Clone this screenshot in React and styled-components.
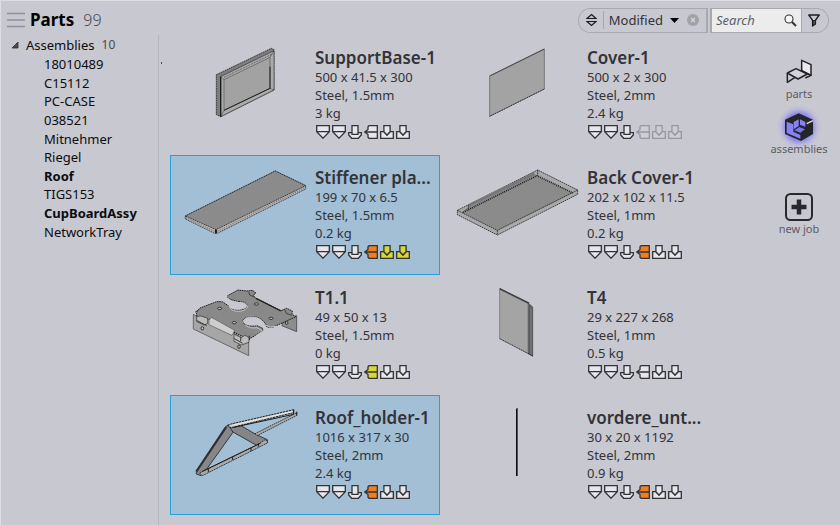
import React, { useState } from "react";
import styled, { createGlobalStyle } from "styled-components";

const GlobalStyle = createGlobalStyle`
  * { box-sizing: border-box; }
  body {
    margin: 0;
    background: #c8c8d0;
    color: #333338;
    font: 13px/18px "Noto Sans", "Open Sans", sans-serif;
  }
  button, input { font: inherit; color: inherit; }
  button { border: 0; padding: 0; background: none; cursor: pointer; }
  svg { display: block; flex: none; }
`;

const Page = styled.div`
  min-height: 100vh;
  display: flex;
  flex-direction: column;
  border-top: 1px solid #dedee3;
  border-left: 1px solid #dedee3;
`;

const Header = styled.header`
  display: flex;
  align-items: center;
  height: 34px;
  padding: 4px 11px 0 6px;
`;

const MenuButton = styled.button`
  margin-right: 5px;
`;

const Title = styled.h1`
  margin: 0;
  font-size: 17px;
  font-weight: 700;
  color: #000;
`;

const Total = styled.span`
  margin-left: 9px;
  flex: 1;
  font-size: 16px;
  font-weight: 300;
  color: #4a4a4f;
`;

const Tools = styled.div`
  display: flex;
  gap: 2px;
  height: 25px;
`;

const SortBox = styled.div`
  display: flex;
  align-items: center;
  border: 1px solid #a9a9ad;
  border-right-width: 2px;
  border-radius: 13px 0 0 13px;
  padding: 0 7px;
`;

const SortField = styled.button`
  display: flex;
  align-items: center;
  gap: 7px;
  margin: 0 8px 0 6px;
  padding-left: 5px;
  border-left: 1px solid #a9a9ad;
`;

const SearchBox = styled.form`
  display: flex;
  align-items: center;
  border: 1px solid #a9a9ad;
  border-left-width: 2px;
  border-radius: 0 13px 13px 0;
`;

const SearchField = styled.label`
  display: flex;
  align-items: center;
  height: 100%;
  width: 90px;
  padding: 0 4px;
  background: #ececec;
  border-right: 1px solid #a9a9ad;
`;

const SearchInput = styled.input`
  flex: 1;
  min-width: 0;
  padding: 0;
  border: 0;
  outline: 0;
  background: none;
  font-size: 13px;
  &::placeholder { color: #5b5f69; font-style: italic; opacity: 1; }
`;

const FilterButton = styled.button`
  padding: 0 8px 0 6px;
`;

const Body = styled.div`
  flex: 1;
  display: flex;
`;

const Tree = styled.nav`
  position: relative;
  width: 158px;
  border-right: 1px solid #b6b6bc;
  color: #0c0c0e;

  &::after {
    content: "";
    position: absolute;
    top: 27px;
    right: -4px;
    width: 1px;
    height: 2px;
    background: #3a4a78;
  }
`;

const Branch = styled.button`
  display: flex;
  align-items: center;
  height: 20px;
  padding-left: 10px;
`;

const BranchCount = styled.span`
  margin-left: 7px;
  font-size: 12px;
  color: #4a4a4f;
`;

const Leaves = styled.ul`
  display: flex;
  flex-direction: column;
  min-height: 186px;
  margin: 0;
  padding: 0 0 0 43px;
  list-style: none;
`;

const Leaf = styled.li`
  flex: 1;
  display: flex;
  align-items: center;
`;

const LeafLink = styled.a`
  color: inherit;
  text-decoration: none;
  font-weight: ${(p) => (p.$strong ? 700 : 400)};
`;

const Grid = styled.main`
  flex: 1;
  display: grid;
  grid-template-columns: repeat(auto-fill, 270px);
  align-content: start;
  column-gap: 2px;
  padding-left: 11px;
`;

const Card = styled.button`
  display: flex;
  min-height: 120px;
  text-align: left;
  border: 1px solid ${(p) => (p.$selected ? "#27a1dd" : "transparent")};
  background: ${(p) => (p.$selected ? "#a2bfd5" : "transparent")};
`;

const Info = styled.span`
  flex: 1;
  min-width: 0;
  display: flex;
  flex-direction: column;
  padding-top: 12px;
`;

const Name = styled.span`
  font-size: 17px;
  line-height: 20px;
  font-weight: 600;
  white-space: nowrap;
`;

const Steps = styled.span`
  display: flex;
  gap: 2px;
  margin: 3px 0 0 1px;
`;

const Rail = styled.aside`
  width: 82px;
  display: flex;
  flex-direction: column;
  align-items: center;
  gap: 11px;
  padding-top: 23px;
`;

const RailButton = styled.button`
  display: flex;
  flex-direction: column;
  align-items: center;
  margin-top: ${(p) => (p.$apart ? 25 : 0)}px;
  font-size: 11px;
  line-height: 16px;
  color: #5c5c62;
`;

const MenuIcon = () => (
  <svg width="18" height="16" viewBox="0 0 18 16" stroke="#909095" strokeWidth="1.4">
    <path d="M0 1.5h18M0 8h18M0 14.5h18" />
  </svg>
);

const SortIcon = () => (
  <svg width="11" height="14" viewBox="0 0 11 14" fill="none" stroke="#1b1b1e" strokeWidth="1.2">
    <path d="M5.5 1.5 10 5.5H1zM1 8.5h9L5.5 12.5z" />
  </svg>
);

const CaretIcon = () => (
  <svg width="9" height="5" viewBox="0 0 9 5"><path d="M0 0h9L4.5 5z" /></svg>
);

const ClearIcon = () => (
  <svg width="12" height="12" viewBox="0 0 12 12">
    <circle cx="6" cy="6" r="6" fill="#a2a2a6" />
    <path d="m4 4 4 4M8 4 4 8" stroke="#d4d4da" strokeWidth="1.3" />
  </svg>
);

const LensIcon = () => (
  <svg width="13" height="13" viewBox="0 0 13 13" fill="none" stroke="#333">
    <circle cx="5" cy="5" r="4" fill="#f6f6f6" strokeWidth="1.1" />
    <path d="m8 8 4 4" strokeWidth="2" />
  </svg>
);

const FilterIcon = () => (
  <svg width="12" height="13" viewBox="0 0 12 13" fill="none" stroke="#1b1b1e" strokeWidth="1.4" strokeLinejoin="round">
    <path d="M.8 1h10.4L7.4 6.3V10L4.6 12V6.3z" />
    <path d="M5 6.5h2.4V10L5 11.5z" fill="#55555a" strokeWidth=".8" />
  </svg>
);

const ExpandedIcon = () => (
  <svg width="15" height="8" viewBox="0 0 15 8"><path d="M7 1v6H1z" fill="#4b4b50" stroke="#303034" strokeWidth=".8" /></svg>
);

const PartIcon = () => (
  <svg width="28" height="28" viewBox="78 24 84 84" stroke="#242427" strokeWidth="4.5" strokeLinejoin="round" fill="none">
    <path d="M128 31 156 44V76L128 62z" fill="#e9e9ee" />
    <path d="M85 69 111 56 145 72 117 87z" fill="#d2d2d8" />
    <path d="M85 69V97L107 83" />
    <path d="M128 62 156 76 139 84" />
  </svg>
);

const AssemblyIcon = () => (
  <svg width="28" height="28" viewBox="78 187 84 84" overflow="visible">
    <defs>
      <radialGradient id="glow">
        <stop offset="0.45" stopColor="#716df5" />
        <stop offset="0.65" stopColor="#8583ee" stopOpacity=".7" />
        <stop offset="0.82" stopColor="#a09fe8" stopOpacity=".28" />
        <stop offset="1" stopColor="#b0b0e0" stopOpacity="0" />
      </radialGradient>
    </defs>
    <circle cx="120" cy="229" r="68" fill="url(#glow)" />
    <path d="M119 188 162 207V250L126 271 78 250V207z" fill="#242429" />
    <path d="M83 213 103 221V243L124 253V264L83 247z" fill="#8582f3" />
    <path d="M104 214 119 206V226L104 236zM123 206 139 214V228L123 222z" fill="#8582f3" />
    <path d="M106 239 121 229 138 236 124 246z" fill="#7774ee" />
    <path d="m143 219 19-9" stroke="#deddf2" strokeWidth="4" />
  </svg>
);

const NewJobIcon = () => (
  <svg width="28" height="28" viewBox="0 0 28 28" fill="none" stroke="#29292c">
    <rect x="1" y="1" width="26" height="26" rx="4.5" strokeWidth="2" />
    <path d="M14 6.5v15M6.5 14h15" strokeWidth="4.5" />
  </svg>
);

const STEP_SHAPES = {
  punch: <path d="M.7.7h12.6v6L7 13.2.7 6.7zM.7 6.7h12.6" />,
  stamp: (
    <>
      <path d="M4 7.7H.7V10L3.7 13.3h6.6l3-3.3V7.7H10z" />
      <path d="M4 .7h6v8.6H4z" />
    </>
  ),
  bend: <path d="M13.3.7H5L4 1.7V4.4L.7 7 4 9.6v2.7l1 1h8.3zM1 7h12.3" />,
  press: (
    <>
      <path d="M.7 6.7H4L7 10l3-3.3h3.3v6.6H.7z" />
      <path d="M3.9.7h6.2v6L7 10 3.9 6.7z" />
    </>
  ),
};

const STEP_ORDER = ["punch", "punch", "stamp", "bend", "press", "press"];
const STEP_FILL = { w: "#e6e6ec", o: "#ee8020", y: "#d7d833", g: "#cdcdd4" };

const StepIcon = ({ shape, tone }) => (
  <svg width="14" height="14" viewBox="0 0 14 14" fill={STEP_FILL[tone]} stroke={tone === "g" ? "#97979c" : "#333336"} strokeWidth="1.3">
    {STEP_SHAPES[shape]}
  </svg>
);

const Drawing = ({ origin, children }) => (
  <svg width="144" height="118" viewBox={`${origin} 432 354`} stroke="#1e1e20" strokeWidth="2.4" strokeLinejoin="round" fill="#9f9f9f">
    {children}
  </svg>
);

const PARTS = [
  {
    name: "SupportBase-1", size: "500 x 41.5 x 300", material: "Steel, 1.5mm", weight: "3 kg", steps: "wwwwww",
    drawing: (
      <Drawing origin="3 -12">
        <path d="M139 104 304 25 312 29V150L152 230 139 224z" fill="#7d7d7f" strokeDasharray="5 2" />
        <path d="M152 110 312 32V150L152 230z" fill="#aaa" strokeWidth="1.5" />
        <path d="M152 110V230" strokeWidth="4" />
        <path d="M162 119 300 52V145L162 211z" fill="#a2a2a2" strokeWidth="1.2" />
        <path d="m162 112 143-69" stroke="#555" strokeDasharray="6 3" fill="none" />
        <path d="m152 110 10 9m-10 111 10-19m150-61-12-5m12-113-12 20" strokeWidth="1.2" />
        <path d="M162 211 300 145V80" strokeWidth="3" fill="none" />
      </Drawing>
    ),
  },
  {
    name: "Cover-1", size: "500 x 2 x 300", material: "Steel, 2mm", weight: "2.4 kg", steps: "wwwggg",
    drawing: (
      <Drawing origin="-6 -12">
        <path d="M134 108 298 27V147L134 229z" fill="#a3a3a3" stroke="#6b6b6b" />
        <path d="M134 108 298 27" stroke="#48484b" strokeWidth="3" />
        <path d="M134 229 298 147" strokeWidth="3" strokeDasharray="3 3" />
      </Drawing>
    ),
  },
  {
    name: "Stiffener pla...", size: "199 x 70 x 6.5", material: "Steel, 1.5mm", weight: "0.2 kg", steps: "wwwoyy", selected: true,
    drawing: (
      <Drawing origin="3 18">
        <path d="M46 198 316 63 407 107V117L142 250H134L46 207z" fill="#b9b9b9" strokeDasharray="4 2" />
        <path d="M46 198 316 63 407 107 138 239z" fill="#8b8b8b" strokeDasharray="4 2" />
        <path d="m48 203 90 43 268-134" fill="none" strokeWidth="1.5" strokeDasharray="4 3" />
        <path d="M138 239v11" strokeWidth="6" />
      </Drawing>
    ),
  },
  {
    name: "Back Cover-1", size: "202 x 102 x 11.5", material: "Steel, 1mm", weight: "0.2 kg", steps: "wwwoww",
    drawing: (
      <Drawing origin="-6 3">
        <path d="M37 166 278 45 398 105V118L157 240 37 179z" fill="#a9a9a9" strokeDasharray="5 2" />
        <path d="M51 172 70 154 268 57 278 62 384 114 157 226z" fill="#8b8b8b" stroke="none" />
        <path d="m70 152 198-96" strokeWidth="8" stroke="#77777a" />
        <path d="m54 172 222-110 108 52" fill="none" strokeWidth="5" strokeDasharray="3 3" />
        <path d="M37 166 157 226 398 105M157 226v14M278 45v17M70 150v12" fill="none" strokeWidth="2.4" strokeDasharray="5 2" />
      </Drawing>
    ),
  },
  {
    name: "T1.1", size: "49 x 50 x 13", material: "Steel, 1.5mm", weight: "0 kg", steps: "wwwyww",
    drawing: (
      <Drawing origin="3 3">
        <path d="M338 138 380 122V170L336 152z" fill="#8d8d8d" stroke="#444" />
        <path d="M70 118 80 124 118 132 190 174 236 200V242L70 162z" fill="#a6a6a6" stroke="#555" />
        <path d="M80 111 90 99 140 80H157L176 93Q178 105 204 106 231 104 232 92 228 79 203 79L183 74 173 68V62L204 45 230 48 247 46 258 54 249 61 258 70 333 107 350 100 367 108 366 118 378 125 310 156Q292 159 288 153 288 145 275 134 253 119 226 129 211 139 226 149 241 156 261 152L278 160V168L238 192 208 180 117 133 80 124z" fill="#898989" strokeWidth="3" strokeDasharray="5 2" />
        <path d="M173 68 182 78 204 83Q230 84 232 94M176 93Q183 110 209 109 231 106 233 92M218 143Q222 125 248 126 276 129 281 148L300 156 318 154M226 150Q240 162 261 158L278 168 238 197 208 185" fill="none" stroke="#c5c5c5" strokeWidth="3" />
        <path d="M117 136 124 127 194 166 186 181 117 149z" fill="#cecece" strokeWidth="1.2" />
        <path d="M80 124V140L102 150 113 145V130L93 123zM192 177 214 188 224 181 237 187V202L214 210 192 199z" fill="#bcbcbc" strokeWidth="1.8" />
        <path d="m81 137 29 15m83 39 25 14m-6-20v14m26-17v13M75 112l11-8" stroke="#39393b" strokeWidth="3" />
        <g fill="#bdbdbd" strokeWidth="2.5">
          <ellipse cx="149" cy="100" rx="6" ry="3.5" />
          <ellipse cx="259" cy="87" rx="6" ry="3.5" />
          <ellipse cx="193" cy="143" rx="6" ry="3.5" />
          <ellipse cx="303" cy="130" rx="6" ry="3.5" />
          <ellipse cx="97" cy="160" rx="4" ry="5" />
          <ellipse cx="207" cy="215" rx="4" ry="5" />
          <ellipse cx="350" cy="144" rx="4" ry="4" />
        </g>
        <path d="m258 70 75 38" stroke="#222" strokeWidth="4" />
        <path d="m344 104 6 12 16 5M236 50l3 10 16 7" fill="none" stroke="#333" />
      </Drawing>
    ),
  },
  {
    name: "T4", size: "29 x 227 x 268", material: "Steel, 1mm", weight: "0.5 kg", steps: "wwwwww",
    drawing: (
      <Drawing origin="-6 3">
        <path d="M249 84 263 96V244L249 236z" fill="#5b5b5d" stroke="#4b4b4d" />
        <path d="M258 97V240" stroke="#929295" />
        <path d="M164 41 249 84V236L164 191z" fill="#a4a4a4" stroke="#77777a" />
        <path d="m164 41 88 44" strokeWidth="5" stroke="#3f3f42" />
        <path d="m164 191 99 51" strokeDasharray="3 3" />
      </Drawing>
    ),
  },
  {
    name: "Roof_holder-1", size: "1016 x 317 x 30", material: "Steel, 2mm", weight: "2.4 kg", steps: "wwwoww", selected: true,
    drawing: (
      <Drawing origin="18 18">
        <path d="M186 116 228 107 274 134 307 149V157L280 169z" fill="#858587" />
        <path d="M270 131 386 73 396 68V76L276 137z" fill="#aaa" strokeDasharray="5 2" />
        <path d="M190 104 204 127 126 236 108 257 94 252 94 242 180 112z" fill="#878789" />
        <path d="M94 245 184 111" strokeWidth="6" stroke="#313134" />
        <path d="M104 249 285 160 300 149 307 153V159L112 257z" fill="#aaaaab" strokeDasharray="6 2" />
        <path d="m112 244 174-84" strokeWidth="3" />
        <path d="M188 107 198 102 386 59V68L198 113z" fill="#d2d2d2" strokeWidth="3" strokeDasharray="7 2" />
        <path d="m206 112 180-39V59m9 17V65M130 236v10m73-46v10m55-36v10M280 160v10" fill="none" strokeWidth="3" />
        <path d="m205 105 176-40" stroke="#f0f0f0" strokeWidth="2" />
      </Drawing>
    ),
  },
  {
    name: "vordere_unt...", size: "30 x 20 x 1192", material: "Steel, 2mm", weight: "0.9 kg", steps: "wwwoww",
    drawing: (
      <Drawing origin="-6 363">
        <path d="M213 401 218 399V602L213 604z" fill="#111" stroke="none" />
        <path d="M217.5 402V602" stroke="#4b5555" strokeWidth="1.5" />
      </Drawing>
    ),
  },
];

const ASSEMBLIES = ["18010489", "C15112", "PC-CASE", "038521", "Mitnehmer", "Riegel", "Roof", "TIGS153", "CupBoardAssy", "NetworkTray"];
const STRONG = new Set(["Roof", "CupBoardAssy"]);

export default function App() {
  const [selected, setSelected] = useState(() => PARTS.map((p) => Boolean(p.selected)));
  const [open, setOpen] = useState(true);
  const toggle = (i) => setSelected((s) => s.map((v, j) => (j === i ? !v : v)));

  return (
    <Page>
      <GlobalStyle />
      <Header>
        <MenuButton aria-label="Menu"><MenuIcon /></MenuButton>
        <Title>Parts</Title>
        <Total>99</Total>
        <Tools>
          <SortBox>
            <button aria-label="Sort direction"><SortIcon /></button>
            <SortField>Modified <CaretIcon /></SortField>
            <button aria-label="Clear sorting"><ClearIcon /></button>
          </SortBox>
          <SearchBox onSubmit={(e) => e.preventDefault()}>
            <SearchField>
              <SearchInput aria-label="Search" placeholder="Search" />
              <LensIcon />
            </SearchField>
            <FilterButton type="button" aria-label="Filter"><FilterIcon /></FilterButton>
          </SearchBox>
        </Tools>
      </Header>
      <Body>
        <Tree aria-label="Assemblies">
          <Branch aria-expanded={open} onClick={() => setOpen(!open)}>
            <ExpandedIcon />
            Assemblies <BranchCount>10</BranchCount>
          </Branch>
          {open && (
            <Leaves>
              {ASSEMBLIES.map((name) => (
                <Leaf key={name}>
                  <LeafLink href={`#${name}`} $strong={STRONG.has(name)}>{name}</LeafLink>
                </Leaf>
              ))}
            </Leaves>
          )}
        </Tree>
        <Grid>
          {PARTS.map((part, i) => (
            <Card key={part.name} $selected={selected[i]} aria-pressed={selected[i]} onClick={() => toggle(i)}>
              {part.drawing}
              <Info>
                <Name>{part.name}</Name>
                <span>{part.size}</span>
                <span>{part.material}</span>
                <span>{part.weight}</span>
                <Steps>
                  {STEP_ORDER.map((shape, n) => <StepIcon key={n} shape={shape} tone={part.steps[n]} />)}
                </Steps>
              </Info>
            </Card>
          ))}
        </Grid>
        <Rail>
          <RailButton><PartIcon />parts</RailButton>
          <RailButton><AssemblyIcon />assemblies</RailButton>
          <RailButton $apart><NewJobIcon />new job</RailButton>
        </Rail>
      </Body>
    </Page>
  );
}
